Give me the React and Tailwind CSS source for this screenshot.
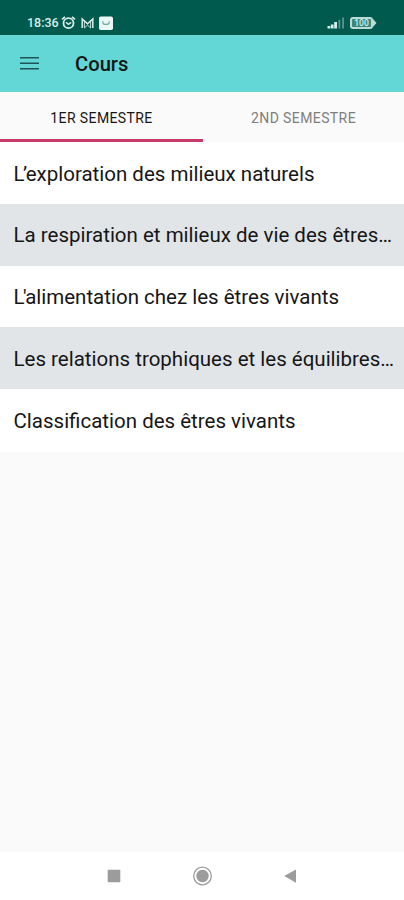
import React from "react";

const courses = [
  { elision: "L’", title: "exploration des milieux naturels" },
  { title: "La respiration et milieux de vie des êtres…" },
  { elision: "L'", title: "alimentation chez les êtres vivants" },
  { title: "Les relations trophiques et les équilibres…" },
  { title: "Classification des êtres vivants" },
];

const StatusBar = () => {
  return (
    <div className="flex h-[35px] shrink-0 items-end justify-between bg-[#005b4e] pb-1 pl-[27px] pr-[27px] text-[#d8eeea]">
      <div className="flex h-4 items-center">
        <span className="w-[34px] whitespace-nowrap text-[12.5px] font-medium leading-4">
          18:36
        </span>
        <svg className="h-4 w-4" viewBox="0 0 16 16" fill="none" stroke="currentColor">
          <circle cx="7.5" cy="8.2" r="5" strokeWidth="1.8" />
          <path d="M1 4.4 4 1.9M11 1.9l3 2.5" strokeWidth="1.8" />
          <path d="M5 7.3 7.4 9.4 10.2 7.3" strokeWidth="1.5" />
        </svg>
        <svg className="ml-1 h-4 w-[13px]" viewBox="0 0 13 16" fill="none" stroke="currentColor">
          <path d="M1.2 13V4l5.3 4.7L11.8 4v9" strokeWidth="1.5" />
          <path d="M3.4 5v8l3.1-3 3.1 3V5" strokeWidth="0.9" />
        </svg>
        <svg className="ml-[5px] h-4 w-[14px]" viewBox="0 0 14 16" fill="none">
          <rect y="1.5" width="14" height="13.5" rx="1.8" fill="#eaf7f5" />
          <path d="M3.8 6.2v1c0 3 6.4 3 6.4 0v-1" stroke="#76a8a0" strokeWidth="1.2" />
        </svg>
      </div>
      <div className="flex h-4 items-center gap-[5px]">
        <svg className="h-3 w-[18px]" viewBox="0 0 18 12" fill="currentColor">
          <rect x="0.5" y="9" width="2.8" height="2.5" />
          <rect x="3.8" y="7.5" width="2.8" height="4" />
          <rect x="7.2" y="5" width="2.8" height="6.5" />
          <rect x="11.5" y="2.8" width="1.8" height="8.7" opacity="0.4" />
          <rect x="15.2" y="0.5" width="1.8" height="11" opacity="0.4" />
        </svg>
        <div className="flex items-center">
          <span className="flex h-3 w-[23px] items-center justify-center rounded-[3px] border-2 border-[#b9dcd6] bg-[#3b877c] text-[8.5px] font-medium leading-none">
            100
          </span>
          <svg className="h-2 w-1" viewBox="0 0 4 8" fill="#b9dcd6">
            <path d="M0 0 3.5 4 0 8z" />
          </svg>
        </div>
      </div>
    </div>
  );
};

const NavBar = () => {
  return (
    <div className="flex h-12 shrink-0 items-center bg-white pl-[107px] text-[#9c9c9c]">
      <svg className="h-[14px] w-[14px]" viewBox="0 0 14 14" fill="currentColor">
        <rect x="0.7" y="0.7" width="12.6" height="12.6" rx="0.8" />
      </svg>
      <svg className="ml-[71px] h-5 w-5" viewBox="0 0 20 20">
        <circle cx="10.5" cy="10" r="8.8" fill="none" stroke="currentColor" strokeWidth="1.3" />
        <circle cx="10.5" cy="10" r="6.2" fill="currentColor" />
      </svg>
      <svg className="ml-[71px] h-[14px] w-[14px]" viewBox="0 0 14 14" fill="currentColor">
        <path d="M1.2 7 13 0.4v13.4z" />
      </svg>
    </div>
  );
};

const App = () => {
  return (
    <div className="flex h-[900px] w-[404px] flex-col overflow-hidden bg-[#fafafa] font-['Roboto',sans-serif] text-[#161616]">
      <StatusBar />
      <header className="flex h-[57px] shrink-0 items-center bg-[#62d7d5] pl-5">
        <svg className="h-[14px] w-[19px]" viewBox="0 0 19 14" stroke="#1d5558" strokeWidth="1.5">
          <path d="M0 0.8h19M0 6.3h19M0 11.8h19" />
        </svg>
        <h1 className="ml-9 pt-0.5 text-[20.2px] font-medium">Cours</h1>
      </header>
      <div className="flex h-[50px] shrink-0 text-[14px] tracking-[0.4px]">
        <div className="flex w-[203px] items-center justify-center border-b-[3px] border-[#c93a69] pt-1.5">
          1ER SEMESTRE
        </div>
        <div className="flex flex-1 items-center justify-center border-b-[3px] border-transparent pt-1.5 text-[#7e7e7e]">
          2ND SEMESTRE
        </div>
      </div>
      <ul className="flex-1">
        {courses.map((course) => (
          <li
            key={course.title}
            className="flex h-[61.8px] items-center whitespace-nowrap bg-white pl-[13.5px] pt-0.5 text-[20.5px] last:h-[62.8px] even:bg-[#e1e5e8]"
          >
            {course.elision && (
              <span className="tracking-[-1.5px]">{course.elision}</span>
            )}
            {course.title}
          </li>
        ))}
      </ul>
      <NavBar />
    </div>
  );
};

export default App;
